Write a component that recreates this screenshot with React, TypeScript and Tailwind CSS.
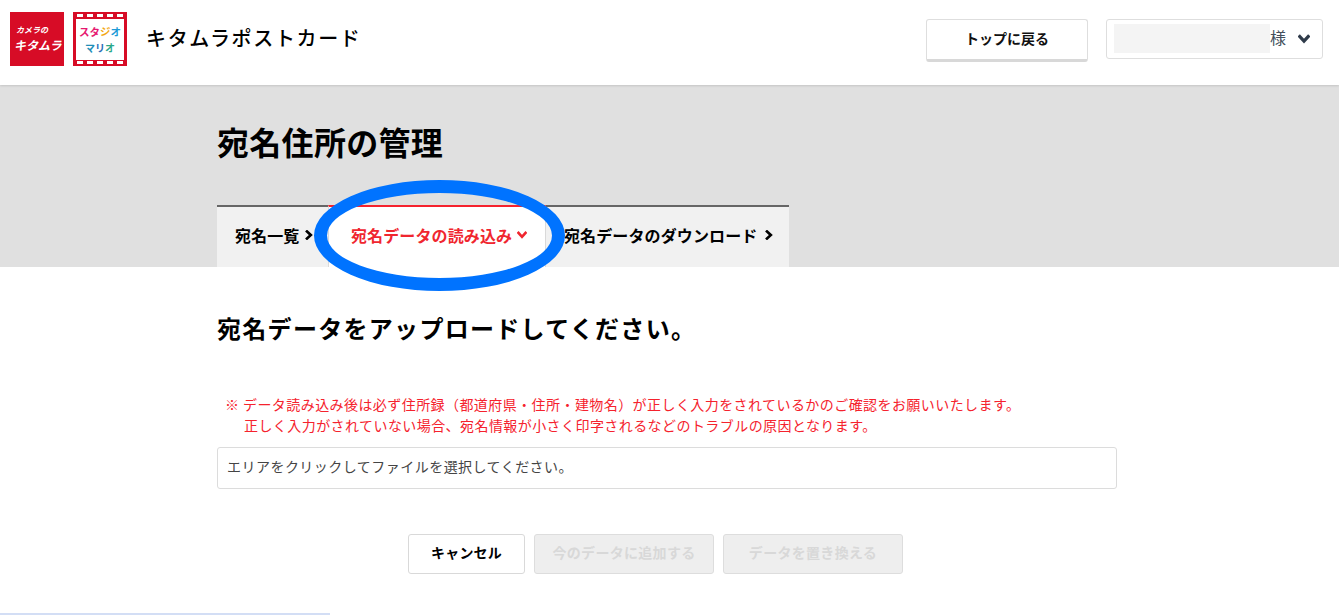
import React from "react";

const font = { fontFamily: '"Noto Sans CJK JP", "Noto Sans", sans-serif' };

function Chevron({ className, dir }: { className: string; dir: "right" | "down" }) {
  return (
    <svg viewBox="0 0 10 10" className={className} fill="none" stroke="currentColor" strokeWidth="2.7" strokeLinecap="square" strokeLinejoin="miter">
      {dir === "right" ? <path d="M3 1.5 L6.8 5 L3 8.5" /> : <path d="M1.5 3 L5 6.8 L8.5 3" />}
    </svg>
  );
}

function KitamuraLogo() {
  return (
    <div className="w-[54px] h-[54px] bg-[#d70c26] text-white flex flex-col items-start justify-center pl-[4px] italic font-bold leading-none">
      <span className="text-[8px] pl-[2px] leading-[12px] whitespace-nowrap">カメラの</span>
      <span className="text-[12px] leading-[18px] whitespace-nowrap">キタムラ</span>
    </div>
  );
}

function Perfs() {
  return (
    <div className="flex justify-center gap-[4px] h-[3px] w-full">
      {[0, 1, 2, 3, 4].map((i) => (
        <span key={i} className="w-[6px] h-[3px] bg-white" />
      ))}
    </div>
  );
}

function StudioLogo() {
  return (
    <div className="w-[54px] h-[54px] bg-[#d70c26] flex flex-col items-center justify-between py-[2px]">
      <Perfs />
      <div className="w-[48px] h-[41px] bg-white flex flex-col items-center justify-center font-bold leading-none">
        <div className="text-[10.5px] leading-[16px] whitespace-nowrap">
          <span className="text-[#e6186f]">ス</span>
          <span className="text-[#e6186f]">タ</span>
          <span className="text-[#f3a712]">ジ</span>
          <span className="text-[#1c9ad6]">オ</span>
        </div>
        <div className="text-[10px] leading-[15px] whitespace-nowrap">
          <span className="text-[#1f8fb8]">マ</span>
          <span className="text-[#2b6fb8]">リ</span>
          <span className="text-[#2aa88a]">オ</span>
        </div>
      </div>
      <Perfs />
    </div>
  );
}

export default function App() {
  return (
    <div className="relative h-[615px] w-[1339px] overflow-hidden bg-white text-black" style={font}>
      <header className="relative z-10 h-[85px] bg-white flex items-center pl-[10px] pr-[16px] pb-[12px] pt-[5px] shadow-[0_1px_2px_rgba(0,0,0,0.12)]">
        <div className="flex items-center gap-[9px]">
          <KitamuraLogo />
          <StudioLogo />
        </div>
        <div className="ml-[19px] text-[20px] font-medium tracking-[1.65px] leading-none pb-[2px]">キタムラポストカード</div>
        <div className="ml-auto flex items-start gap-[18px] pt-[2px]">
          <button className="w-[162px] h-[43px] bg-white rounded-[3px] border border-[#dedede] border-b-[3px] border-b-[#d8d8d8] text-[14px] font-bold text-[#111] pb-[2px]">
            トップに戻る
          </button>
          <div className="w-[217px] h-[40px] rounded-[3px] border border-[#dedede] flex items-center pl-[7px] pr-[12px]">
            <span className="w-[156px] h-[29px] bg-[#f4f4f4]" />
            <span className="text-[16px] text-[#44505c] leading-none pb-[3px]">様</span>
            <Chevron dir="down" className="ml-auto w-[12px] h-[12px] text-[#2f3b4a]" />
          </div>
        </div>
      </header>

      <section className="h-[182px] bg-[#e0e0e0] pl-[217px] flex flex-col">
        <h1 className="mt-[34px] text-[32px] font-bold leading-[44px] tracking-[0.3px]">宛名住所の管理</h1>
        <nav className="mt-auto flex h-[62px] w-[572px] bg-[#f1f1f1] border-t-2 border-[#666] text-[16px] font-bold tracking-[0.12px]">
          <div className="w-[111px] pl-[18px] flex items-center gap-[5px] pb-[4px]">
            <span className="whitespace-nowrap">宛名一覧</span>
            <Chevron dir="right" className="w-[10px] h-[10px] shrink-0" />
          </div>
          <div className="relative -mt-[2px] border-t-2 border-[#f5222d] w-[218px] bg-white flex items-center justify-start pl-[22px] gap-[5px] text-[#f0262f] border-x border-x-[#d9d9d9] pb-[4px]">
            <span className="whitespace-nowrap">宛名データの読み込み</span>
            <Chevron dir="down" className="w-[10px] h-[10px] shrink-0" />
          </div>
          <div className="flex-1 pl-[18px] flex items-center gap-[7px] pb-[4px]">
            <span className="whitespace-nowrap">宛名データのダウンロード</span>
            <Chevron dir="right" className="w-[10px] h-[10px] shrink-0" />
          </div>
        </nav>
      </section>

      <main className="pl-[217px] w-[1117px]">
        <h2 className="mt-[43px] text-[24px] font-bold leading-[36px] tracking-[1.3px]">宛名データをアップロードしてください。</h2>
        <div className="mt-[48px] pl-[8px] text-[14px] leading-[21px] text-[#f5222d] tracking-[0.43px]">
          <p className="whitespace-nowrap">※ データ読み込み後は必ず住所録（都道府県・住所・建物名）が正しく入力をされているかのご確認をお願いいたします。</p>
          <p className="whitespace-nowrap pl-[19px]">正しく入力がされていない場合、宛名情報が小さく印字されるなどのトラブルの原因となります。</p>
        </div>
        <div className="mt-[11px] w-[900px] h-[42px] border border-[#dcdcdc] rounded-[3px] flex items-center pl-[9px] text-[14px] text-[#444] tracking-[0.47px] pb-[4px]">
          エリアをクリックしてファイルを選択してください。
        </div>
        <div className="mt-[45px] w-[877px] flex justify-center gap-[9px]">
          <button className="w-[117px] h-[40px] bg-white border border-[#d9d9d9] rounded-[3px] text-[14px] font-bold tracking-[0.2px] pb-[4px]">キャンセル</button>
          <button className="w-[180px] h-[40px] bg-[#eeeeee] border border-[#dddddd] rounded-[3px] text-[14px] font-bold tracking-[0.3px] text-[#d8d8d8] pb-[4px]">今のデータに追加する</button>
          <button className="w-[180px] h-[40px] bg-[#eeeeee] border border-[#dddddd] rounded-[3px] text-[14px] font-bold tracking-[0.3px] text-[#d8d8d8] pb-[4px]">データを置き換える</button>
        </div>
      </main>

      <div className="absolute left-[314px] top-[180px] w-[251px] h-[111px] rounded-[50%] border-[13px] border-[#0073ff] z-20" />
      <div className="absolute left-0 bottom-0 w-[330px] h-[2px] bg-[#d3def5]" />
    </div>
  );
}
